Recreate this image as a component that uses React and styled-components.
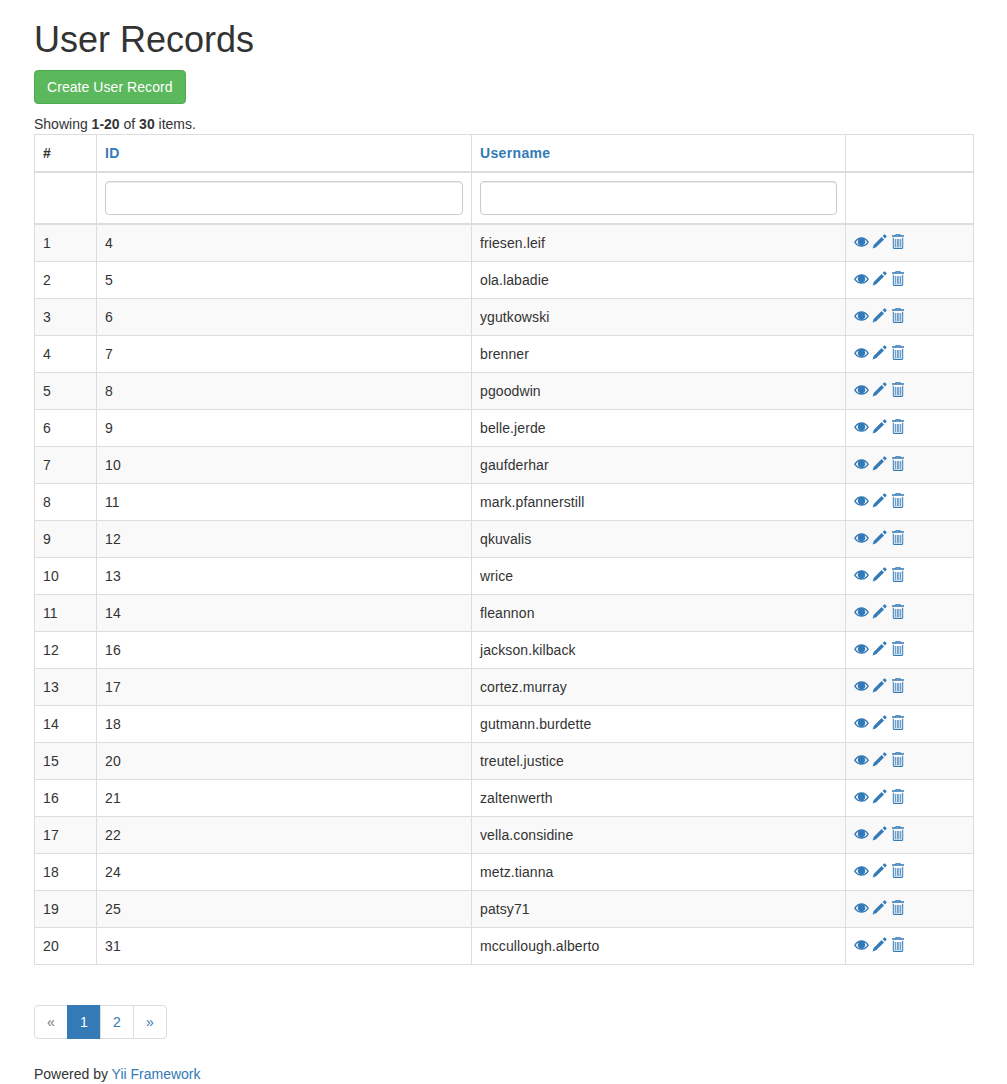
import { createGlobalStyle } from "styled-components";
import styled from "styled-components";

const users = [
  [4, "friesen.leif"],
  [5, "ola.labadie"],
  [6, "ygutkowski"],
  [7, "brenner"],
  [8, "pgoodwin"],
  [9, "belle.jerde"],
  [10, "gaufderhar"],
  [11, "mark.pfannerstill"],
  [12, "qkuvalis"],
  [13, "wrice"],
  [14, "fleannon"],
  [16, "jackson.kilback"],
  [17, "cortez.murray"],
  [18, "gutmann.burdette"],
  [20, "treutel.justice"],
  [21, "zaltenwerth"],
  [22, "vella.considine"],
  [24, "metz.tianna"],
  [25, "patsy71"],
  [31, "mccullough.alberto"],
];

function EyeIcon() {
  return (
    <Icon viewBox="0 0 15 15">
      <path
        fillRule="evenodd"
        d="M0 8.200C2 4.900 4.600 3.200 7.500 3.200S13 4.900 15 8.200c-2 3.100-4.600 4.600-7.500 4.600S2 11.300 0 8.200ZM1.700 8.200c1.400 2 3.400 3.300 5.800 3.300s4.400-1.300 5.800-3.300c-.9-1.200-1.900-2.100-3-2.700.6.700 1 1.600 1 2.500 0 2-1.700 3.600-3.800 3.600S3.700 10 3.700 8c0-.9.400-1.800 1-2.500-1.100.6-2.100 1.500-3 2.700Z"
      />
      <path d="M7.500 5.800a2.300 2.300 0 1 1-2.300 2.300c0-.4.100-.7.300-1 .2.400.6.700 1 .7.700 0 1.200-.5 1.200-1.200 0-.3-.1-.600-.2-.8Z" />
    </Icon>
  );
}

function PencilIcon() {
  return (
    <Icon viewBox="0 0 15 15">
      <path d="M10.600 2 11.900.7c.4-.4.900-.4 1.300 0l1.100 1.100c.4.400.4.900 0 1.300L13 4.400Z" />
      <path d="M9.600 3 12 5.400 4.100 13.300.6 14.400 1.700 10.900Z" />
    </Icon>
  );
}

function TrashIcon() {
  return (
    <Icon viewBox="0 0 15 15">
      <path d="M5.800 0h4.400l.7 1.300H14v1.500H2V1.300h3.100ZM6.500.7l-.3.600h3.600l-.3-.6Z" />
      <path d="M2.800 3.800h1v9.900h8.400V3.800h1v10c0 .700-.5 1.200-1.200 1.200H4c-.7 0-1.200-.5-1.200-1.200Z" />
      <path d="M4.800 5h.9v8h-.9ZM6.800 5h.9v8h-.9ZM8.400 5h.9v8h-.9ZM10.300 5h.9v8h-.9Z" />
    </Icon>
  );
}

export default function App() {
  return (
    <>
      <GlobalStyle />
      <Page>
        <Title>User Records</Title>
        <Toolbar>
          <CreateButton href="#">Create User Record</CreateButton>
        </Toolbar>
        <Summary>
          Showing <b>1-20</b> of <b>30</b> items.
        </Summary>
        <Table>
          <colgroup>
            <col style={{ width: 62 }} />
            <col style={{ width: 375 }} />
            <col style={{ width: 374 }} />
            <col />
          </colgroup>
          <thead>
            <tr>
              <Th>#</Th>
              <Th>
                <SortLink href="#">ID</SortLink>
              </Th>
              <Th>
                <SortLink href="#">Username</SortLink>
              </Th>
              <Th />
            </tr>
            <tr>
              <FilterCell />
              <FilterCell>
                <FilterInput type="text" />
              </FilterCell>
              <FilterCell>
                <FilterInput type="text" />
              </FilterCell>
              <FilterCell />
            </tr>
          </thead>
          <tbody>
            {users.map(([id, username], i) => (
              <Row key={id}>
                <Td>{i + 1}</Td>
                <Td>{id}</Td>
                <Td>{username}</Td>
                <Td>
                  <Actions>
                    <EyeIcon />
                    <PencilIcon />
                    <TrashIcon />
                  </Actions>
                </Td>
              </Row>
            ))}
          </tbody>
        </Table>
        <Pagination>
          <PageItem $disabled>«</PageItem>
          <PageItem $active>1</PageItem>
          <PageItem>2</PageItem>
          <PageItem>»</PageItem>
        </Pagination>
        <Footer>
          Powered by <FooterLink href="#">Yii Framework</FooterLink>
        </Footer>
      </Page>
    </>
  );
}

const GlobalStyle = createGlobalStyle`
  * {
    box-sizing: border-box;
  }
  body {
    margin: 0;
    background: #fff;
    color: #333;
    font-family: "Liberation Sans", Arial, sans-serif;
    font-size: 14px;
    line-height: 20px;
  }
`;

const Page = styled.div`
  width: 1007px;
  padding: 0 33px 0 34px;
`;

const Title = styled.h1`
  margin: 20px 0 10px;
  font-size: 36px;
  font-weight: 500;
  line-height: 39.6px;
  color: #333;
`;

const Toolbar = styled.p`
  margin: 0 0 10px;
`;

const CreateButton = styled.a`
  display: inline-block;
  padding: 6px 12px;
  font-size: 14px;
  line-height: 20px;
  letter-spacing: 0.06px;
  color: #fff;
  text-decoration: none;
  background: #5cb85c;
  border: 1px solid #4cae4c;
  border-radius: 4px;
`;

const Summary = styled.div`
  height: 20px;
`;

const Table = styled.table`
  width: 940px;
  margin-bottom: 20px;
  table-layout: fixed;
  border-collapse: collapse;
  border: 1px solid #ddd;
`;

const Th = styled.th`
  padding: 8px;
  text-align: left;
  font-weight: 700;
  line-height: 20px;
  border: 1px solid #ddd;
  border-bottom-width: 2px;
`;

const SortLink = styled.a`
  letter-spacing: 0.35px;
  color: #337ab7;
  text-decoration: none;
`;

const FilterCell = styled.td`
  padding: 8px;
  border: 1px solid #ddd;
  border-bottom-width: 2px;
`;

const FilterInput = styled.input`
  display: block;
  width: 100%;
  height: 34px;
  padding: 6px 12px;
  font-size: 14px;
  background: #fff;
  border: 1px solid #ccc;
  border-radius: 4px;
  box-shadow: inset 0 1px 1px rgba(0, 0, 0, 0.075);
`;

const Row = styled.tr`
  &:nth-child(odd) {
    background: #f9f9f9;
  }
`;

const Td = styled.td`
  padding: 8px;
  line-height: 20px;
  letter-spacing: 0.1px;
  vertical-align: top;
  border: 1px solid #ddd;
`;

const Actions = styled.div`
  display: flex;
  align-items: center;
  gap: 3px;
  height: 17px;
  color: #337ab7;
`;

const Icon = styled.svg`
  display: block;
  width: 15px;
  height: 15px;
  fill: currentColor;
`;

const Pagination = styled.div`
  display: inline-flex;
  margin: 20px 0;
  vertical-align: top;
`;

const PageItem = styled.a`
  display: block;
  min-width: 34px;
  margin-left: -1px;
  padding: 6px 0;
  text-align: center;
  line-height: 20px;
  color: ${(p) => (p.$active ? "#fff" : p.$disabled ? "#777" : "#337ab7")};
  background: ${(p) => (p.$active ? "#337ab7" : "#fff")};
  border: 1px solid ${(p) => (p.$active ? "#337ab7" : "#ddd")};

  &:first-child {
    margin-left: 0;
    border-radius: 4px 0 0 4px;
  }
  &:last-child {
    border-radius: 0 4px 4px 0;
  }
`;

const Footer = styled.div`
  margin-top: 5px;
  height: 20px;
`;

const FooterLink = styled.a`
  color: #337ab7;
  text-decoration: none;
`;
